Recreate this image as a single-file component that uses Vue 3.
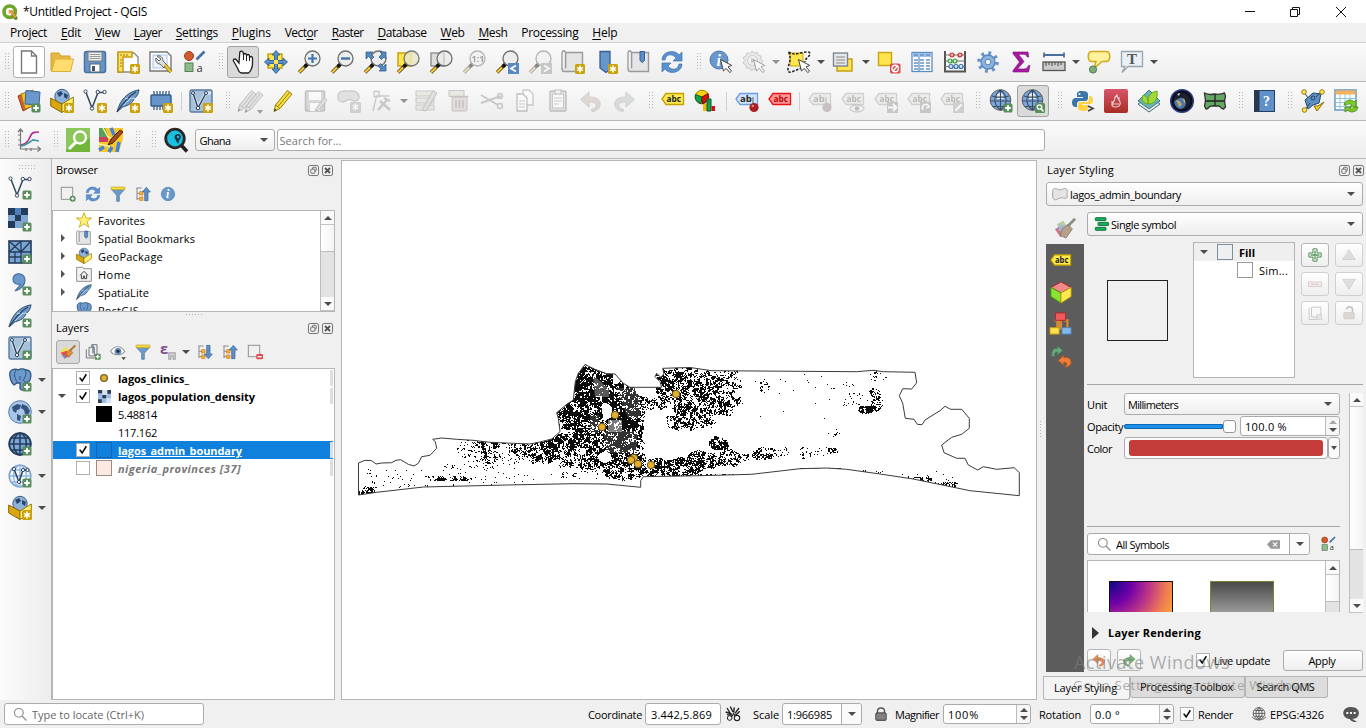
<script setup>
// Tracks a run of text so it fills the given width in pixels.
const vFit = {
  mounted(el, { value }) {
    if (!value) return
    const w = el.getBoundingClientRect().width
    const n = el.textContent.trim().length
    el.style.letterSpacing = ((value - w) / n).toFixed(3) + 'px'
  }
}

const plus = '<rect x="14.5" y="14.5" width="9" height="9" rx="1.5" fill="#5b8c5c"/><path d="M19 16.2v5.6M16.2 19h5.6" stroke="#fff" stroke-width="2"/>'
const star = '<rect x="14" y="14" width="10" height="10" rx="1.500" fill="#c9a20c"/><path d="M19 15.500v7M16 17.300l6 3.400M22 17.300l-6 3.400" stroke="#fff" stroke-width="1.500"/>'
const cursor = '<path d="M11.500 9.500l3 11.500 2.700-2.600 3.600 4.200 1.700-1.500-3.500-4.200 3.700-1.500z" fill="#fff" stroke="#444" stroke-width="1"/>'
const handle = '<path d="M2 22.500L10 14.500" stroke="#4b3a10" stroke-width="3.600"/><path d="M2 22.500L7 17.500" stroke="#f7c936" stroke-width="2.200"/><path d="M8 16.500l2.600-2.600" stroke="#111" stroke-width="3.600"/>'
const lens = '<circle cx="15.500" cy="8.500" r="7.500" fill="#ececea" fill-opacity=".9" stroke="#6d6d6d" stroke-width="1.300"/>'
const world = '<circle cx="12" cy="12" r="11.300" fill="#a9c6ea" stroke="#5a7ea8"/><path d="M4 7l5-3 4 1-1 4-3 1-1 3-3-2zM14 4l5 2 3 5-2 4-3-1-1-4-3-2zM9 14l4 2-1 5-3-1z" fill="#35557f"/>'
const grid = '<path d="M.7 12h22.600M12 .7v22.600M3 6h18M3 18h18M12 .7C3.500 5 3.500 19 12 23.300M12 .7c8.500 4.300 8.500 18.300 0 22.600" fill="none"'
const vee = '<path d="M3 3.500L9 19 15 3.500h6" fill="none" stroke="#33475f" stroke-width="1.500"/><g fill="#fff" stroke="#33475f"><circle cx="2.500" cy="2.500" r="1.600"/><circle cx="9" cy="19.500" r="1.700"/><circle cx="14.800" cy="3" r="1.700"/><circle cx="21.500" cy="3" r="1.700"/></g>'
const feather = '<path d="M1 23C4 11 11 3 23 .8c-.3 4-2.500 7-5 9-1.500 4-5 6.500-11 8L1 23z" fill="#729bcb" stroke="#31506f"/><path d="M1 23C7 14 13 7 20 3" fill="none" stroke="#24405c" stroke-width="1.200"/><path d="M7 17l8-8 4 .5M9 10l3-1" stroke="#c4d9ef" fill="none"/>'
const box3d = '<circle cx="12" cy="7.500" r="7.200" fill="#8fb0d9" stroke="#3e5f88"/><path d="M7 4l4-2 2 3-4 3zM14 4l4 2-1 4-3-2z" fill="#27466b"/><path d="M.7 9L12 15v8.500L.7 17z" fill="#d9a60c" stroke="#866807"/><path d="M23.300 8L12 15v8.500L23.300 16z" fill="#ffee66" stroke="#997a10"/>'
const meshbox = '<rect x="1" y="1" width="22" height="22" rx="1.500" fill="#a8c1da" stroke="#587ba0" stroke-width="1.400"/><path d="M3 2.500L9 18 17 4h5" fill="none" stroke="#dbe7f3" stroke-width="3"/><path d="M4 4L9 19 17 4" fill="none" stroke="#29435e" stroke-width="1.400"/><g fill="#fff" stroke="#29435e"><circle cx="4" cy="4" r="1.500"/><circle cx="9" cy="19" r="1.700"/><circle cx="17" cy="4" r="1.500"/></g>'
const tag = (f, s, t, c) => `<path d="M1 10l4-5.500h17.500v11H5z" fill="${f}" stroke="${s}" stroke-width="1.300"/><text x="5.500" y="13.200" font-size="9" font-weight="bold" fill="${c}" font-family="Open Sans" textLength="14.500" lengthAdjust="spacingAndGlyphs">${t}</text>`
const gtag = tag('#e4e3d2', '#aaa', 'abc', '#777')
const refresh = '<path d="M2 10C2 1 15-1 19 5l3-3v9h-9l3-3C12 3 6 4 5 10zM22 14c0 9-13 11-17 5l-3 3v-9h9l-3 3c4 5 10 4 11-2z" fill="#5d91cd" stroke="#3f72ac" stroke-width=".7"/>'
const pencil = (f, s) => `<path d="M3 22.500l1.500-6.500L16.500 1.500l4.500 3.500L9 19.500z" fill="${f}" stroke="${s}"/><path d="M4.800 16.200l4 3M7 17.500L18.500 3.500" stroke="${s}"/><path d="M3 22.500l.7-3 2 1.500z" fill="#333"/>`
const undo = (f, s) => `<path d="M10 3v5c8 0 12 3 11 8-.5 4-3 6-8 6.500l-.500-2c4-1 5-3 4.500-5S14 13 10 13v5L1.500 10.500z" fill="${f}" stroke="${s}"/>`
const bars = '<g fill="#12b25a" stroke="#0a6336" stroke-width="1.300"><rect x="2" y="2.500" width="16" height="4.500" rx="1"/><rect x="6" y="9.700" width="16" height="4.500" rx="1"/><rect x="2" y="17" width="16" height="4.500" rx="1"/></g>'
const funnel = '<path d="M2 5l8 9v9h4v-9l8-9z" fill="#6c98cb" stroke="#45719f"/><rect x="1.500" y="1.500" width="21" height="4" rx="1" fill="#f6dc3d" stroke="#b9a022"/>'
const tree = '<path d="M2 3h8M3 3v18M3 11h6M3 19h6" stroke="#888" fill="none" stroke-width="1.500"/><rect x="7" y="8.500" width="5" height="5" fill="#f4ad42" stroke="#d87f14"/><rect x="7" y="16.500" width="5" height="5" fill="#f4ad42" stroke="#d87f14"/>'
const style = '<circle cx="7" cy="6" r="4.500" fill="#cf5a2c" stroke="#9c3f1a"/><path d="M14.500 9.500l8-8" stroke="#4371a8" stroke-width="2.600"/><rect x="3" y="13" width="8" height="8.500" fill="#8eb98d" stroke="#568057"/><text x="14.500" y="21.500" font-size="11" font-family="Open Sans" fill="#333">a</text>'
const elephant = '<path d="M2 4c2-4 7-3 8-2 3-2 7-1 8 0 5 0 6 5 4 10-1 2-3 3-5 2l-1 7c-1 2-4 1-4-1v-5H9l-3 2C3 15 1 8 2 4z" fill="#6d9acc" stroke="#31557f" stroke-width="1.300"/><path d="M8 2c-3 4-1 8 1 12M17 2c2 4 0 7-2 11M12 8v4" stroke="#31557f" fill="none"/>'

const icons = {
  new: '<path d="M4.500 1h10l5 5v17h-15z" fill="#fff" stroke="#777" stroke-width="1.400"/><path d="M14.500 1v5h5" fill="none" stroke="#777" stroke-width="1.300"/>',
  open: '<path d="M1 21V3h8l2 3h9v4" fill="#e5b83f" stroke="#d5a02e"/><path d="M1.500 21.500L5 9h18.500l-3 12.500z" fill="#ffdc6b" stroke="#dcae3a"/>',
  save: '<rect x="1.500" y="1.500" width="21" height="21" rx="2" fill="#6795ca" stroke="#4472a4" stroke-width="1.500"/><rect x="5" y="2" width="14" height="9" fill="#eee" stroke="#777"/><path d="M6.500 4.500h11M6.500 6.500h11M6.500 8.500h11" stroke="#999"/><rect x="7" y="14" width="10" height="8" fill="#fff" stroke="#567"/><rect x="9" y="16" width="3" height="5" fill="#456"/>',
  layoutNew: '<path d="M2 3h16l4 4v15H2z" fill="#fff" stroke="#888" stroke-width="1.300"/><path d="M2 2h14v5H7v15H2z" fill="#ffe066" stroke="#c49c16" stroke-width="1.500"/><path d="M5 4v2M8 4v2M11 4v2M4 10h2M4 13h2M4 16h2" stroke="#987410"/>' + star,
  layoutMgr: '<path d="M1 2h17l4 4v15H1z" fill="#fff" stroke="#777" stroke-width="1.400"/><rect x="4" y="5" width="14" height="13" fill="#eef4fb" stroke="#aac3df"/><path d="M8 6c3-1 6 1 6 5l4 4-3 3-4-4c-3 0-5-3-4-6l3 3 2-2z" fill="#ddd" stroke="#666"/><path d="M16 15l6 7" stroke="#8a6f12" stroke-width="3.600"/><path d="M16 15l6 7" stroke="#e8c63a" stroke-width="2.300"/>',
  style,
  hand: '<path d="M8 13L5.500 10c-1.500-2-4-.5-3 1l4 7c1 3 2 5 4 5h7c2-1 4-6 4-9V8c0-2-2.700-2-3 0V6c0-2-3-2-3 0V5c0-2-3-2-3 0l-.3-2.500C11.500.5 8.500 1 8.700 3z" fill="#fff" stroke="#222" stroke-width="1.300"/><path d="M12.500 5v5M15.500 6v5M18.500 7v4" stroke="#222"/>',
  pan: '<rect x="4" y="4" width="14" height="14" fill="#ffe44d" stroke="#c9a40d" stroke-width="1.500"/><path d="M12 .5l4 4.500h-2.500v5.500H19V8l4.500 4-4.500 4v-2.500h-5.500V19H16l-4 4.500L8 19h2.500v-5.500H5V16L.5 12 5 8v2.500h5.500V5H8z" fill="#5c8fc8" stroke="#2f5d91" stroke-width=".9"/><path d="M10 10h4v4h-4z" fill="#ffe44d"/>',
  zin: handle + lens + '<path d="M15.500 4v9M11 8.500h9" stroke="#3f74ad" stroke-width="2.200"/>',
  zout: handle + lens + '<path d="M11 8.500h9" stroke="#3f74ad" stroke-width="2.400"/>',
  zfull: handle + lens + '<path d="M3 2h7L8 4l3 3-2.500 2.500L5.500 6.500 3 9zM23 2h-6l2 2-3 3 2.500 2.500L21 7l2 2zM23 21h-7l2-2-3-3 2.500-2.500L20.500 16.500 23 14z" fill="#5688c0" stroke="#315f92" stroke-width=".8"/>',
  zsel: '<rect x="2" y="3" width="13" height="13" fill="#ffe44d" stroke="#c9a40d" stroke-width="1.500"/>' + handle + '<circle cx="15.500" cy="8.500" r="7.500" fill="#e9e6c4" fill-opacity=".85" stroke="#777" stroke-width="1.300"/>',
  zlay: '<rect x="2" y="3" width="13" height="13" fill="#ddd" stroke="#888" stroke-width="1.300"/>' + handle + lens + '<path d="M15 3v12" stroke="#bbb"/>',
  z11: handle + lens + '<text x="9.500" y="12" font-size="9" font-weight="bold" font-family="Open Sans" fill="#444">1:1</text>',
  zprev: handle + lens + '<rect x="13" y="13" width="11" height="11" fill="#5689bf"/><path d="M21 15.500l-5 3 5 3" fill="none" stroke="#fff" stroke-width="1.800"/>',
  znext: handle + lens + '<rect x="13" y="13" width="11" height="11" fill="#999"/><path d="M16 15.500l5 3-5 3" fill="none" stroke="#fff" stroke-width="1.800"/>',
  mapview: '<path d="M4.500 2.500h17v19H3c-2.500 0-2.500-4 0-4h1.500z" fill="#e5e5e5" stroke="#999" stroke-width="1.400"/><path d="M4.500 18V3c0-3-3.500-3-3.500 0v16" fill="#f3f3f3" stroke="#999" stroke-width="1.300"/>' + star,
  bookmark: '<path d="M6 1.500h10v18l-4 3-6-4.500z" fill="#6896ca" stroke="#365f91" stroke-width="1.300"/>' + star,
  bookmarks: '<path d="M4.500 2.500h17v19H3c-2.500 0-2.500-4 0-4h1.500z" fill="#e5e5e5" stroke="#999" stroke-width="1.400"/><path d="M4.500 18V3c0-3-3.500-3-3.500 0v16" fill="#f3f3f3" stroke="#999" stroke-width="1.300"/><path d="M13 1.500h4.500v9l-2.200 2-2.300-2z" fill="#5c8fca" stroke="#345f94"/>',
  refresh,
  identify: '<circle cx="10" cy="10" r="9" fill="#6b98ca" stroke="#4a78ad"/><text x="7.500" y="16" font-size="16" font-style="italic" font-weight="bold" font-family="Liberation Serif" fill="#fff">i</text>' + cursor,
  action: '<path d="M10 1l2.200 2.200L15 2l1 3 3 1-.5 3L21 11l-2 2.500.3 3-3 .8-1.300 2.700-3-1-2.500 1.500L7.500 18 4.500 18l-.8-3L1 13l1.500-2.500L1.200 7.500 4 6l.8-3 3 .5z" fill="#ddd" stroke="#999"/><circle cx="10.500" cy="10.500" r="5" fill="#eee" stroke="#999"/><path d="M9 7.500l4.500 3-4.500 3z" fill="#999"/>' + cursor,
  select: '<path d="M3 3h13v13H3z" fill="#ffe44d" stroke="#c9a40d"/><path d="M1.500 2c5 3 8 2 12 1s10-2 9.500 1-5 4-5 8M1.500 2c3 6 1 10 0 14s-1 7 3 6l10-4" fill="none" stroke="#222" stroke-width="1.500" stroke-dasharray="2.500 1.500"/>' + cursor,
  selform: '<rect x="5" y="9" width="15" height="12" fill="#ffe44d" stroke="#c09a0c" stroke-width="1.400"/><rect x="1.500" y="3" width="14" height="13" fill="#e8e8e8" stroke="#7d8790" stroke-width="1.400"/><path d="M4 7h9M4 10h9M4 13h9" stroke="#888" stroke-width="1.200"/>',
  desel: '<rect x="1.500" y="2.500" width="13" height="13" fill="#ffe44d" stroke="#c9a40d" stroke-width="1.400"/><rect x="13" y="13.500" width="10.500" height="10" rx="1.500" fill="#df4d4d"/><circle cx="18.200" cy="18.500" r="3.200" fill="none" stroke="#fff" stroke-width="1.400"/><path d="M16 21l4.500-5" stroke="#fff" stroke-width="1.400"/>',
  table: '<rect x="2" y="2.500" width="20" height="19" fill="#fff" stroke="#5b8bc0" stroke-width="1.300"/><path d="M2.500 3h19v4h-19z" fill="#9dc0e8"/><path d="M4 10h4M10 10h4M16 10h4M4 13h4M10 13h4M16 13h4M4 16h4M10 16h4M16 16h4M4 19h4M10 19h4M16 19h4M9 7v14M4 5h4M10 5h4M16 5h4" stroke="#6794c8" stroke-width="1.300"/>',
  abacus: '<path d="M2 1v21M22 1v21M1 21.500h22" stroke="#555" stroke-width="2"/><path d="M2 5h20M2 11h20M2 16.500h20" stroke="#777"/><g stroke-width="1.200"><g fill="#f6b0b0" stroke="#c02f2f"><circle cx="9" cy="5" r="2"/><circle cx="17" cy="5" r="2"/></g><g fill="#c9ecc9" stroke="#3f9b45"><circle cx="7" cy="11" r="2"/><circle cx="12" cy="11" r="2"/></g><g fill="#d7e7fa" stroke="#3b6ea8"><circle cx="8" cy="16.500" r="2"/><circle cx="13" cy="16.500" r="2"/><circle cx="18" cy="16.500" r="2"/></g></g>',
  gear: '<circle cx="12" cy="12" r="9" fill="none" stroke="#6795ca" stroke-width="3.600" stroke-dasharray="2.900 4.169"/><circle cx="12" cy="12" r="7" fill="#8db2de" stroke="#5687c0" stroke-width="1.300"/><circle cx="12" cy="12" r="2.800" fill="#f4f4f4" stroke="#5687c0"/>',
  sigma: '<path d="M4 2h15l.7 5h-1.500c-.7-2-1.500-2.700-4-2.700H9.500L15 11.500 8.500 19h6c3 0 4-1 5-3.500H21L19.500 22H4v-1.500l6.500-8.500L4 3.700z" fill="#a918a0" stroke="#7a0a78" stroke-width=".6"/>',
  measure: '<path d="M2 5h20M2 2.500v5M22 2.500v5" stroke="#4a6f9c" stroke-width="1.800"/><rect x="1" y="12" width="22" height="8.500" fill="#ccc" stroke="#555" stroke-width="1.300"/><path d="M4 12v4M7 12v3M10 12v4M13 12v3M16 12v4M19 12v3" stroke="#444"/>',
  tip: '<path d="M5 1.500h14c5 0 5 10 0 10h-4l-8 7 2-7H5c-5 0-5-10 0-10z" fill="#fff29a" stroke="#d3a91a" stroke-width="1.500"/><circle cx="6" cy="19.500" r="3.600" fill="#7dab7c" stroke="#4e7d50"/>',
  text: '<path d="M1.500 1.500h21v15H8l-6 6 3-6H1.500z" fill="#e9f0f6" stroke="#9aa5ae" stroke-width="1.300"/><text x="7" y="14" font-size="15" font-weight="bold" font-family="Liberation Serif" fill="#555">T</text>',
  dsm: '<path d="M1 7l11-5 5 14-11 6z" fill="#d35f2f" stroke="#9b3c16"/><path d="M4 5l12-4 3 15-11 4z" fill="#f0bf2c" stroke="#a77f10"/><path d="M9 1.500L23 3l-1 13-14-1z" fill="#6b98cc" stroke="#3b6698"/>' + plus,
  gpkg: box3d + star, vee: vee + star, feather: feather + star,
  chip: '<rect x="2" y="6" width="20" height="11" rx="1" fill="#6794c8" stroke="#345c8b" stroke-width="1.400"/><path d="M5 2v4M8 2v4M11 2v4M14 2v4M17 2v4M20 2v4M5 17v4M8 17v4M11 17v4M14 17v4" stroke="#345c8b" stroke-width="1.300"/>' + star,
  meshN: meshbox + star,
  edits: '<g transform="translate(-3 0)">' + pencil('#ccc', '#888') + '</g><g transform="translate(4 1)">' + pencil('#ccc', '#888') + '</g><path d="M19 21h6l-3 4z" fill="#444"/>',
  pencil: pencil('#f7df3f', '#91800d'),
  saveEd: '<rect x="1.500" y="2" width="19" height="20" rx="1" fill="#bbb" stroke="#888" stroke-width="1.500"/><rect x="5" y="3" width="12" height="8" fill="#fff"/><rect x="6" y="14" width="10" height="8" fill="#fff"/><path d="M11 21l9-12 3 2-9 11z" fill="#ccc" stroke="#888"/>',
  poly: '<path d="M2 4c4-4 6-1 11-2 5-1 9 2 9 6s-4 5-8 3-5 2-8 2-5-2-5-4 0-4 1-5z" fill="#ccc" stroke="#999" stroke-width="1.300"/><rect x="13" y="13" width="11" height="11" rx="1.500" fill="#aaa"/><path d="M18.500 14.500v7M15.500 16l6 4M21.500 16l-6 4" stroke="#fff" stroke-width="1.500"/>',
  node: '<path d="M3 22L6.500 7h13M4 2.500h5v5H4z" fill="none" stroke="#999" stroke-width="1.300"/><path d="M8 21L17 11M10 12l10 9M14 9l6 3" stroke="#999" stroke-width="2.500"/>',
  multi: '<g fill="#dcdcc4" stroke="#999"><rect x="2" y="2" width="18" height="5"/><rect x="2" y="9" width="18" height="5"/><rect x="2" y="16" width="18" height="5"/></g><path d="M8 21L19 2l4 2-11 18z" fill="#ccc" stroke="#888"/>',
  del: '<rect x="2" y="1.500" width="15" height="6" fill="#dcdcc4" stroke="#999"/><rect x="5" y="8" width="15" height="14" rx="1" fill="#dfc3c3" stroke="#a88"/><path d="M3.500 7.500h18M9 11v8M12.500 11v8M16 11v8" stroke="#a88" stroke-width="1.500"/>',
  cut: '<path d="M1 6l17 10M1 14L21 7" stroke="#999" stroke-width="2"/><circle cx="20" cy="7" r="2.500" fill="none" stroke="#999" stroke-width="1.500"/><circle cx="20" cy="17" r="2.500" fill="none" stroke="#999" stroke-width="1.500"/>',
  copy: '<path d="M10 1h6l4 4v11H10z" fill="#fff" stroke="#999" stroke-width="1.300"/><path d="M4 5h6l4 4v13H4z" fill="#fff" stroke="#888" stroke-width="1.300"/><path d="M6 12h6M6 15h6M6 18h6" stroke="#999"/>',
  paste: '<rect x="4" y="2" width="16" height="20" rx="1" fill="#ccc" stroke="#888" stroke-width="1.400"/><rect x="6.500" y="5" width="11" height="14" fill="#fff" stroke="#999"/><rect x="9" y="1" width="6" height="4" fill="#eee" stroke="#888"/><path d="M8 9h8M8 12h8M8 15h5" stroke="#999"/>',
  undo: undo('#ccb8aa', '#b9a294'), redo: '<g transform="matrix(-1 0 0 1 24 0)">' + undo('#b4c6b4', '#9cb09c') + '</g>',
  abc: tag('#fce94f', '#c4a000', 'abc', '#222'),
  abcLow: '<g transform="translate(0 2)">' + tag('#fce94f', '#c4a000', 'abc', '#222') + '</g>',
  diagram: '<circle cx="8" cy="8" r="6.800" fill="#f5d20c" stroke="#a08000"/><path d="M8 8L1.500 5.500C.5 10 3 14 7 14.800z" fill="#12a04d" stroke="#075b28"/><path d="M8 8l6-3.500c1.500 5-1 9-5.500 10.300z" fill="#d41111" stroke="#850909"/><path d="M9 15h4v7H9z" fill="#f5b90c"/><path d="M13 10h4v12h-4z" fill="#12a04d" stroke="#075b28"/><path d="M17.500 17H21v5h-3.500z" fill="#d41111"/>',
  abcPin: '<path d="M1 10l4-5.500h17.500v11H5z" fill="#cfe4fb" stroke="#6aa0de" stroke-width="1.300"/><text x="5" y="13.200" font-size="9.500" font-weight="bold" fill="#222" font-family="Open Sans">ab</text><path d="M18 8v8" stroke="#888" stroke-width="1.500"/><circle cx="19" cy="18.500" r="4.600" fill="#a82020"/><circle cx="17.800" cy="17" r="1.200" fill="#d88"/>',
  abcRed: tag('#ff9999', '#ee1111', 'abc', '#c00000'),
  gPin: '<path d="M1 10l4-5.500h17.500v11H5z" fill="#e4e3d2" stroke="#aaa" stroke-width="1.300"/><text x="5" y="13.200" font-size="9.500" font-weight="bold" fill="#777" font-family="Open Sans">ab</text><path d="M18 8v8" stroke="#999" stroke-width="1.500"/><circle cx="19" cy="18.500" r="4.600" fill="#a88"/>',
  gEye: gtag + '<ellipse cx="16" cy="19.500" rx="7" ry="3.500" fill="#eee" stroke="#888"/><circle cx="16" cy="19.500" r="2.300" fill="#888"/>',
  gMove: gtag + '<rect x="13" y="13" width="11" height="11" fill="#999"/><path d="M14 18.500h8M19 15l3.500 3.500L19 22" stroke="#fff" stroke-width="1.800" fill="none"/>',
  gRot: gtag + '<rect x="13" y="13" width="11" height="11" fill="#999"/><path d="M16 21c-3-5 5-8 6-3l-3 1" stroke="#fff" stroke-width="1.800" fill="none"/>',
  gEdit: gtag + '<rect x="13" y="13" width="11" height="11" fill="#aaa"/><path d="M15.500 21.500l6-6" stroke="#fff" stroke-width="2.200"/>',
  globeP: '<circle cx="11.500" cy="11" r="10.300" fill="#7ba6dc" stroke="#5a5a5a"/><path d="M8 5c2-1.500 4-1.500 6 0l1 5H8z" fill="#fff" opacity=".8"/><path d="M3 7c4 1.500 13 1.500 17 0M1.500 12h20M4 17.500h15M11.500 1v20M11.500 1C4 7 4 15 11.500 21M11.500 1c7.500 6 7.500 14 0 20" stroke="#3d4d5d" fill="none" stroke-width="1.100"/>' + plus,
  globeS: '<circle cx="11.500" cy="11" r="10.300" fill="#7ba6dc" stroke="#5a5a5a"/><path d="M8 5c2-1.500 4-1.500 6 0l1 5H8z" fill="#fff" opacity=".8"/><path d="M3 7c4 1.500 13 1.500 17 0M1.500 12h20M4 17.500h15M11.500 1v20M11.500 1C4 7 4 15 11.500 21M11.500 1c7.500 6 7.500 14 0 20" stroke="#3d4d5d" fill="none" stroke-width="1.100"/><rect x="14" y="14" width="10" height="10" rx="1.500" fill="#5b8c5c"/><circle cx="18.500" cy="18" r="2.200" fill="none" stroke="#fff" stroke-width="1.300"/><path d="M20 19.500l2.500 3" stroke="#fff" stroke-width="1.500"/>',
  python: '<path d="M11 2c-5 0-5 2-5 4v2h6v1H4c-4 0-4 9 0 9h2v-3c0-2 1.500-3 3-3h5c2 0 3-1 3-3V5c0-2-2-3-6-3z" fill="#3a76a8"/><path d="M12 22c5 0 5-2 5-4v-2h-6v-1h8c4 0 4-8 0-8h-1v3c0 2-1.500 3-3 3h-5c-2 0-3 1-3 3v3c0 2 2 3 5 3z" fill="#ffd343"/><circle cx="8.500" cy="5" r="1" fill="#fff"/><path d="M17 17l5 2.500-5 2.500" fill="none" stroke="#444" stroke-width="1.700"/>',
  fire: '<defs><linearGradient id="fi" x2="0" y2="1"><stop offset="0" stop-color="#d9566b"/><stop offset="1" stop-color="#a82d22"/></linearGradient></defs><rect width="24" height="24" rx="2" fill="url(#fi)"/><path d="M13 6c-4 3-1 4-3 6s-3 6 1 6 6-2 5-5-3-3-3-7zM8 12v5M15 8v3M9 15h6" fill="none" stroke="#fff" stroke-opacity=".75" stroke-width="1.100"/>',
  leaf: '<path d="M1 15l11 8 11-8-11-8z" fill="#eee" stroke="#3d6873"/><path d="M1 12l11 8 11-8L12 1z" fill="#6ab3b3" stroke="#3c7980"/><path d="M11 15C4 14 5 9 6 6c4 2 6 4 5 9zM11 15c-1-8 3-12 9-13 1 8-2 13-9 13z" fill="#a0d936" stroke="#6aa71d"/>',
  earth: '<circle cx="12" cy="12" r="11.300" fill="#0a0c1e" stroke="#2c3c7c" stroke-width="1.500"/><circle cx="12" cy="12" r="8.500" fill="#1b202a"/><path d="M4 13c3-4 9-6 11-2s0 8-4 9c-4 0-6-3-7-7z" fill="#4776a8"/><path d="M6 11l4 1 2 4-3 2zM12 9l3 2v4z" fill="#bfa66b"/><path d="M7 5l3-1-1 3z" fill="#d5d9e5"/>',
  bow: '<path d="M1.500 4c4 2 6 2 10 1 4 1 6 0 10-1l1 3-1 5 1 6-2 2c-4-1-3-3-5-3H8c-2 0-2 3-5 3l-1.500-3 1-5z" fill="#65a765" stroke="#333" stroke-width="1.300"/><path d="M2 12h20M12 5v12" stroke="#222" stroke-width="1.300"/>',
  help: '<rect x="2.500" y="1.500" width="20" height="21" fill="#5f90c8" stroke="#24405f"/><rect x="2.500" y="1.500" width="5" height="21" fill="#26384c"/><text x="11" y="17" font-size="14" font-weight="bold" font-family="Liberation Serif" fill="#fff">?</text>',
  topo: '<path d="M4 11l8-7 8 1-2 9-6 2-5 4z" fill="#5d8ec4" stroke="#27486e"/><path d="M3 3l4 6M20 3l-5 5M4 21l5-7" stroke="#444"/><g fill="#ffe44d" stroke="#9a7c10"><circle cx="3" cy="3" r="2.300"/><circle cx="21" cy="3" r="2.300"/><circle cx="3.500" cy="21" r="2.300"/></g><circle cx="12" cy="9" r="2" fill="none" stroke="#27486e"/><path d="M13 17l3 5 7-9-6 4z" fill="#f8cf1c" stroke="#8c6c07"/>',
  sheet: '<rect x="1" y="1" width="21" height="20" fill="#fff" stroke="#5a90b6" stroke-width="1.400"/><path d="M1.500 1.500h20v4h-20z" fill="#f5b05c"/><path d="M1 9.500h21M1 13.500h21M1 17.500h21M6 5v16M11 5v16M16 5v16" stroke="#8fc5e4"/><path d="M10 16c1-6 9-6 10-3l2-2v7h-6l2-2c-2-2-4-1-5 0zM24 18c-1 6-9 6-10 3l-3 2v-5h6l-1.500 1.500c2 1 4 .5 5-1.500z" fill="#7ccb2a" stroke="#448512" stroke-width=".8"/>',
  plot: '<path d="M3.500 1v20h20M1 4l2.500-3L6 4M20.500 18.500l3 2.500-3 2.500M1 7h3M1 12h3M1 17h3M9 20v3M14 20v3" fill="none" stroke="#777" stroke-width="1.200"/><path d="M4 17c5-1 7-3 9-8s4-5 9-5" fill="none" stroke="#b52996" stroke-width="1.700"/><path d="M4 18c6-1 8-4 12-6l6 1" fill="none" stroke="#3d96a0" stroke-width="1.700"/>',
  osmS: '<rect width="24" height="24" fill="#72b53b"/><path d="M0 0h24v10L0 22z" fill="#8cc75a"/><circle cx="14" cy="9.500" r="6" fill="none" stroke="#fff" stroke-width="2.300"/><path d="M3 21l7-7" stroke="#fff" stroke-width="3"/>',
  osmE: '<path d="M0 0h24v10l-4 14H0z" fill="#f8c72c"/><path d="M0 0h6l3 7v6H0z" fill="#57a05a"/><path d="M0 9h9v5H0z" fill="#cc4060"/><path d="M4 0l5 9 7 3M0 16l10 2 2 6" stroke="#fff3a0" stroke-width="1.500" fill="none"/><path d="M12 0l3 7M20 14l-2 10M10 24l3-5M0 22l5-3" stroke="#4085d8" stroke-width="3.500" fill="none"/><path d="M9 17l3-6 9-9 3 2-10 11z" fill="#a14e1c" stroke="#552406"/>',
  qms: '<path d="M17 17l6 6.500" stroke="#222" stroke-width="3.500"/><circle cx="11" cy="10.500" r="9.300" fill="#18bfdf" stroke="#282828" stroke-width="2.800"/><path d="M14 6c-4 0-4 4-2.500 5.500L14 16l1.500-4.500C18 10 17 6 14 6z" fill="#234"/><circle cx="14" cy="9" r="1.200" fill="#18bfdf"/>',
  sVee: vee + plus,
  raster: '<rect width="20" height="20" fill="#7fa5d2"/><path d="M0 0h7v7H0zM13 0h7v7h-7zM7 7h6v6H7zM0 13h7v7H0z" fill="#233c5b"/><path d="M7 0h6v7H7z" fill="#4f7fb8"/>' + plus,
  sMesh: '<rect x="1" y="1" width="22" height="22" fill="#7aa4d3" stroke="#233c5b" stroke-width="1.600"/><path d="M1 12h22M13 1v22M1 1l12 11M13 1L1 12M13 12L23 1M7 12v11M1 17h12" stroke="#233c5b" fill="none" stroke-width="1.300"/>' + plus,
  comma: '<path d="M5 7c0-7 12-7 12 1 0 6-4 9-10 11 3-3 5-5 5-7-4 1-7-1-7-5z" fill="#6b98cb" stroke="#44719f" stroke-width="1.200"/>' + plus,
  sFeather: feather + plus, sMeshV: meshbox + plus,
  pg: elephant + plus, world: world + plus,
  wms: '<circle cx="12" cy="12" r="10.800" fill="#7ba5d6" stroke="#233c5b" stroke-width="1.800"/>' + grid + ' stroke="#233c5b" stroke-width="1.500"/>' + plus,
  wfs: '<circle cx="12" cy="12" r="10.800" fill="#f4f8fd" stroke="#7ba2cf" stroke-width="1.500"/>' + grid + ' stroke="#8fb3de" stroke-width="1.300"/><path d="M6 5l5 13 4-12h4" fill="none" stroke="#2c4563" stroke-width="1.500"/><g fill="#fff" stroke="#2c4563"><circle cx="6" cy="5" r="1.600"/><circle cx="11" cy="18" r="1.600"/><circle cx="15" cy="6" r="1.600"/><circle cx="19.500" cy="6" r="1.600"/></g>' + plus,
  sGpkg: box3d + star,
  addsel: '<rect x="2" y="2" width="17" height="18" fill="none" stroke="#999" stroke-width="1.600"/><circle cx="19" cy="19" r="4.500" fill="#5b8c5c"/><path d="M19 16.500v5M16.500 19h5" stroke="#fff" stroke-width="1.600"/>',
  funnel,
  collapse: tree + '<path d="M17 2l6 7h-3.500v13h-5V9H11z" fill="#5d8fc6" stroke="#31608f"/>',
  expand: tree + '<path d="M17 22l6-7h-3.500V2h-5v13H11z" fill="#5d8fc6" stroke="#31608f"/>',
  info: '<circle cx="12" cy="12" r="10" fill="#6b98cb" stroke="#4a78ad"/><text x="9" y="18.500" font-size="18" font-style="italic" font-weight="bold" font-family="Liberation Serif" fill="#fff">i</text>',
  fav: '<path d="M12 1l3 8h8.500l-7 5.300 2.700 8.700-7.200-5.300L4.800 23l2.700-8.700L.5 9H9z" fill="#fff27a" stroke="#c7a913" stroke-width="1.300"/>',
  box: box3d,
  home: '<path d="M1 2h9l2 2h11v19H1z" fill="#f3f3f3" stroke="#888" stroke-width="1.400"/><path d="M6 14l6-6 6 6M8 13v6h3v-4h2v4h3v-6" fill="none" stroke="#444" stroke-width="1.500"/>',
  featherS: feather, elephant,
  brush: '<path d="M3 8l7-4 4 6-7 6z" fill="#b9cfa0"/><path d="M1 13l6-3 7 8-7 4z" fill="#cf7389"/><path d="M6 8l6 2-1 6-6-1z" fill="#9cb9d8"/><path d="M9 13l6-5 5 5-7 10-6-3z" fill="#b7a08a" stroke="#8d7f6c"/><path d="M15 10l8-8" stroke="#8d8d82" stroke-width="3"/>',
  brushR: '<path d="M1 9l9-5 4 9-8 4z" fill="#f2df58"/><path d="M1 13l9-3 5 7-8 5z" fill="#ee4c43"/><path d="M3 16l7 2-3 4z" fill="#5797d9"/><path d="M9 14l6-6 4 5-6 7z" fill="#d9923d" stroke="#aa6425"/><path d="M15 10l8-8" stroke="#b47532" stroke-width="3"/>',
  addgrp: '<path d="M2 8v13h12M6 5v13h8V5zM10 4V1h8v16h-3" fill="none" stroke="#777" stroke-width="1.500"/><path d="M12 2v12" stroke="#456c94" stroke-width="1.800"/>' + plus,
  eye: '<path d="M1 11c5-9 16-9 21 0-5 7-16 7-21 0z" fill="#fff" stroke="#999" stroke-width="1.600"/><circle cx="12" cy="11" r="5" fill="#5f88b4"/><circle cx="12" cy="11" r="2.200" fill="#1d2c3d"/><path d="M17 20h7l-3.500 4z" fill="#444"/>',
  eps: '<text x="0" y="15" font-size="22" font-weight="bold" font-family="Open Sans" fill="#7c4b8b">ε</text><path d="M13 13h10v10h-3.500v-5h-3v5H13z" fill="#ccc" stroke="#888"/>',
  remove: '<rect x="2" y="2" width="17" height="17" fill="none" stroke="#999" stroke-width="1.600"/><rect x="14" y="15" width="10" height="8" rx="1.500" fill="#df4d4d"/><path d="M16 19h6" stroke="#fff" stroke-width="2"/>',
  rast2: '<rect width="24" height="24" fill="#9fbde0"/><path d="M0 0h8v6H0zM17 0h7v7h-7zM8 9h7v6H8zM0 17h7v7H0z" fill="#2e3d52"/><path d="M8 0h9v9H8zM15 15h9v9h-9z" fill="#d5e2f2"/>',
  bars,
  polyG: '<path d="M1 8c0-5 5-5 8-3s6 0 9-1 5 1 5 4-1 4 0 7-3 4-6 3-6 0-9 2-7 0-7-4z" fill="#e4e4e4" stroke="#999" stroke-width="1.300"/>',
  cube: '<path d="M12 1l11 6-11 6L1 7z" fill="#f08a8a" stroke="#a72222"/><path d="M1 7l11 6v11L1 17z" fill="#8ae234" stroke="#4e9a06"/><path d="M23 7l-11 6v11l11-7z" fill="#fce94f" stroke="#c4a000"/>',
  boxes: '<path d="M8 8v8M5 8h5v9H4M12 9v9M15 8h4v9" stroke="#d28b34" stroke-width="2.500" fill="none"/><rect x="6" y="0" width="11" height="8" fill="#ef5b5b" stroke="#b42828"/><rect x="0" y="16" width="10" height="7" fill="#fce050" stroke="#c09a0c"/><rect x="13" y="16" width="10" height="7" fill="#86b7ea" stroke="#4b81ba"/>',
  hist: '<path d="M2 12C1 5 5 3 8 4V1l6 5-6 5V8C6 7 5 9 5 13z" fill="#6aa67a" stroke="#467c56"/><path d="M15 11v3c5-1 8 1 8 5 0 3-3 5-7 5 3-2 3-6-1-5v3l-6-5z" fill="#ee7d3a" stroke="#b05a24"/>',
  add: '<path d="M8.500 1.500h7v7h7v7h-7v7h-7v-7h-7v-7h7z" fill="#f4faf4" stroke="#4f8751" stroke-width="1.700"/><path d="M12 4.500v15M4.500 12h15" stroke="#5c9a5e" stroke-width="2.200"/>',
  minus: '<rect x="1" y="8.500" width="22" height="8" fill="#eee" stroke="#c99" stroke-width="1.500"/><path d="M5 12.500h14" stroke="#c99" stroke-width="2"/>',
  up: '<path d="M12 3l11 17H1z" fill="#ccc" stroke="#999"/>', down: '<path d="M12 21L1 4h22z" fill="#ccc" stroke="#999"/>',
  dup: '<path d="M2 3v20h14M6 2h16v17H6z" fill="#fafafa" stroke="#999" stroke-width="1.500"/><path d="M15 15h8v8h-8z" fill="#ddd" stroke="#999"/>',
  unlock: '<rect x="3" y="11" width="18" height="11" rx="1" fill="#c7bfb4" stroke="#999"/><path d="M8 6c0-6 10-6 10 0v5" fill="none" stroke="#999" stroke-width="3"/>',
  undoC: undo('#ef8a50', '#bf6e40'), redoC: '<g transform="matrix(-1 0 0 1 24 0)">' + undo('#78b87b', '#568c59') + '</g>',
  mag: '<circle cx="10" cy="10" r="7.500" fill="none" stroke="#909090" stroke-width="2"/><path d="M15.500 15.500L23 23" stroke="#909090" stroke-width="2.300"/>',
  clear: '<path d="M0 12l7-8h17v16H7z" fill="#999"/><path d="M11 8l8 8M19 8l-8 8" stroke="#fff" stroke-width="2"/>',
  extents: '<path d="M3 3l5 8M8 1l4 8M1 9l9 3M14 2l-1 8M21 3l-6 8M3 13l8 1M12 11l7 7M7 20l5-7M22 8l-6 6" stroke="#222" stroke-width="2"/><circle cx="18" cy="18" r="4" fill="#fff" stroke="#222" stroke-width="1.700"/><circle cx="7" cy="18" r="3.500" fill="#eee" stroke="#222" stroke-width="1.500"/>',
  lock: '<path d="M6 11V7c0-7 12-7 12 0v4" fill="none" stroke="#555" stroke-width="2.500"/><rect x="3" y="10" width="18" height="13" rx="2" fill="#777" stroke="#444" stroke-width="1.500"/><path d="M4 14h16M4 18h16" stroke="#999"/>',
  crs: '<circle cx="12" cy="11" r="10" fill="#eee" stroke="#555" stroke-width="1.500"/><path d="M2 11h20M4 6h16M4 16h16M12 1v20M12 1C5 6 5 16 12 21M12 1c7 5 7 15 0 20M0 17c6 7 18 7 24 0" stroke="#555" stroke-width="1.500" fill="none"/>',
  bubble: '<path d="M12 1.500c16 0 15 18 2 18l7 4c-4 1-9 0-11-4C-3 18-3 1.500 12 1.500z" fill="#555"/><path d="M5 10.500h3M10.500 10.500h3M16 10.500h3" stroke="#fff" stroke-width="3"/>',
  logo: '<circle cx="11.500" cy="11.500" r="8.500" fill="none" stroke="#6ea52b" stroke-width="5.500"/><path d="M12 12l4-1 7 9v3.500h-4z" fill="#4c8a1f"/><path d="M10 9h7l-1 2 6 9-3 1-6-8-3 2z" fill="#f09a43"/>',
  dock: '<rect x="1" y="1" width="22" height="22" rx="4" fill="none" stroke="#666" stroke-width="2"/><rect x="10" y="5" width="8" height="8" rx="1.500" fill="none" stroke="#666" stroke-width="2"/><rect x="6" y="9" width="9" height="9" rx="1.500" fill="#f0f0f0" stroke="#666" stroke-width="2"/>',
  shut: '<rect x="1" y="1" width="22" height="22" rx="4" fill="none" stroke="#666" stroke-width="2"/><path d="M6.500 6.500l11 11M17.500 6.500l-11 11" stroke="#555" stroke-width="4"/>',
  check: '<path d="M4 11l6 8L20 3" fill="none" stroke="#000" stroke-width="3.600"/>',
  point: '<circle cx="12" cy="12" r="5" fill="#e2ac35" stroke="#776022" stroke-width="2"/>'
}

// Toolbars: 'H' is a grip, 'S' a separator; suffixes: > menu arrow, ! disabled, * pressed, + raised
const parse = s => s.split(' ').map(t => {
  const name = t.replace(/[>!*+]/g, '')
  return { name, kind: name === 'H' ? 'grip' : name === 'S' ? 'sep' : 'btn', dd: t.includes('>'), off: t.includes('!'), on: t.includes('*'), up: t.includes('+') }
})
const row1 = parse('H new+ open save layoutNew layoutMgr style H hand* pan zin zout zfull zsel zlay z11! zprev znext! mapview bookmark bookmarks refresh H identify action!> select> selform> desel table abacus gear sigma measure> tip text>')
const row2 = parse('H dsm gpkg vee feather chip S meshN H edits! pencil saveEd! poly! node!> multi! del! cut! copy! paste! undo! redo! H abc diagram S abcPin abcRed S gPin! gEye! gMove! gRot! gEdit! H globeP globeS* H python fire leaf earth bow H help H topo sheet')
const side = parse('sVee raster sMesh comma sFeather sMeshV pg> world> wms wfs> sGpkg>')

const menus = [['Pro', 'j', 'ect', 37], ['', 'E', 'dit', 20], ['', 'V', 'iew', 25], ['', 'L', 'ayer', 28], ['', 'S', 'ettings', 42], ['', 'P', 'lugins', 39], ['Vect', 'o', 'r', 33], ['', 'R', 'aster', 32], ['', 'D', 'atabase', 49], ['', 'W', 'eb', 24], ['', 'M', 'esh', 29], ['Pro', 'c', 'essing', 57], ['', 'H', 'elp', 25]]

const browser = [['fav', 'Favorites', 47, 0], ['bookmarks', 'Spatial Bookmarks', 97, 1], ['box', 'GeoPackage', 65, 1], ['home', 'Home', 33, 1], ['featherS', 'SpatiaLite', 51, 1], ['elephant', 'PostGIS', 41, 0]]

const outline = 'M358.500 495V463L365 460.300 371.700 460.700 376 464 381.700 463 391.700 462.700 396 460.300 400.700 459.700 408.300 464.300 414 466 418.300 463.300 421.700 456.700 430 455.300 436.700 448.300 435.300 441.700 432.700 439.300 441.700 438 456.700 439.300 473.300 440.300 490 442.300 513.300 443.300 530 444 540 442 551.700 439 560 431.700 558.300 418.300 556.700 412.700 566.700 404.300 573.300 400 575.300 381.700 578.300 373.300 585 364.500 595 369.300 606.700 373.700 615 374 623.300 383.300 630 387.300 661.700 387.300 660 381.700 655 376.700 656.700 373.300 660.700 377.300 664 374 662.700 368.300 690 367.500 711.700 370.700 856.700 371.700 873.300 370.300 883.300 371.700 915 372.300 916.700 382.700 911.700 389 902.700 388.700 899.300 395.700 902.700 403.300 905.300 418.300 914 419.300 917.300 424.300 922 424.700 925 420 940 410.700 945 406.300 950.700 409.300 961.700 409.300 969.300 418.300 969.300 428.300 961.700 434.300 951.700 437.300 941.700 445 944 452.700 956.700 458.300 965 458.300 968.300 465 977.700 470 983.300 466.700 996.700 469.300 1014.300 467.700 1019.300 472.700V495.700L970 490.700 913.300 479 880 474 846.700 469.300 826.700 468 800 468.700 751.700 474.300 700 475.700 643.300 476.700 640.700 480.700V487.300L606.700 484 573.300 483.700 506.700 485 423.300 487 376.700 492.300z'

// Population raster: [x, y, radius x, radius y, density]
const blobs = [
  [590, 383, 26, 24, .8], [618, 400, 24, 20, .66], [588, 413, 38, 28, .68], [622, 425, 22, 34, .74], [590, 440, 34, 18, .62],
  [612, 452, 28, 18, .62], [622, 470, 22, 10, .5], [582, 462, 24, 9, .46], [590, 474, 44, 5, .14], [648, 402, 10, 6, .4],
  [542, 451, 20, 13, .6], [555, 443, 8, 6, .75], [495, 450, 38, 13, .38], [462, 468, 32, 4, .15], [445, 478, 32, 3, .34], [480, 474, 60, 14, .02], [385, 475, 30, 12, .03],
  [364, 491, 10, 4, .6], [450, 486, 100, 2, .08],
  [690, 385, 33, 22, .6], [694, 402, 33, 16, .56], [712, 402, 26, 16, .5], [690, 420, 24, 10, .46], [726, 382, 14, 15, .36], [661, 375, 6, 7, .7],
  [652, 467, 20, 10, .6], [680, 467, 28, 9, .68], [704, 460, 26, 10, .56], [718, 444, 11, 7, .66], [724, 458, 18, 9, .5], [742, 456, 8, 6, .4], [760, 454, 9, 6, .5], [771, 453, 7, 6, .5], [782, 453, 7, 6, .25], [805, 452, 7, 7, .38],
  [820, 451, 20, 4, .12], [832, 450, 6, 3, .45], [866, 409, 9, 4, .82], [876, 404, 6, 9, .5], [874, 392, 6, 6, .45], [873, 374, 4, 6, .4], [764, 386, 5, 7, .4], [830, 382, 30, 6, .03], [880, 376, 6, 5, .2], [855, 398, 16, 8, .08], [835, 433, 8, 5, .2],
  [820, 468.500, 22, 1.500, .7], [860, 471, 24, 2, .35], [700, 475, 60, 1.500, .3], [924, 479, 40, 8, .02], [920, 479, 12, 3, .4], [945, 484, 14, 3, .35], [790, 400, 60, 30, .003]
]
const holes = [[606, 411, 5, 9], [605, 457, 7, 6], [575, 470, 6, 2]]
let seed = 20117
const rnd = () => (seed = (seed * 1103515245 + 12345) % 2147483648) / 2147483648
const lattice = Array.from({ length: 3 }, () => Array.from({ length: 60000 }, () => rnd()))
const noise = (k, x, y, s) => {
  const u = (x - 350) / s, v = (y - 360) / s, a = Math.floor(u), b = Math.floor(v), f = u - a, g = v - b
  const at = (p, q) => lattice[k][q * 700 + p]
  return (at(a, b) * (1 - f) + at(a + 1, b) * f) * (1 - g) + (at(a, b + 1) * (1 - f) + at(a + 1, b + 1) * f) * g
}
let speck = ''
for (let y = 364; y < 496; y++) {
  for (let x = 358; x < 1020; x++) {
    const wide = noise(0, x, y, 7) - .5, mid = noise(1, x, y, 3.300) - .5
    let d = 0
    for (const [cx, cy, rx, ry, p] of blobs) {
      const q = ((x - cx) / rx) ** 2 + ((y - cy) / ry) ** 2 + (ry > 3 ? wide * 1.300 : 0)
      if (q < 1) d = Math.max(d, p * (q > .6 ? 1.300 - q * .5 : 1))
    }
    if (!d || holes.some(([cx, cy, rx, ry]) => ((x - cx) / rx) ** 2 + ((y - cy) / ry) ** 2 + mid < 1)) continue
    if (d > .1) d += mid * .55 + wide * .35
    const c = lattice[2][((y - 364) >> 1) * 340 + ((x - 358) >> 1)]
    if (d < .15 ? rnd() < d : rnd() * .5 + c * .5 < d * .9 + .03) speck += `M${x} ${y}h1v1h-1z`
  }
}
const clinics = [[676, 394], [615, 415], [602, 427], [634, 458], [631, 460], [638, 464], [651, 465]]
</script>

<template>
  <div class="win">
    <header class="title">
      <svg class="i16" viewBox="0 0 24 24" v-html="icons.logo" />
      <span v-fit="124" class="ttl">*Untitled Project - QGIS</span>
      <svg class="caps" viewBox="0 0 120 20"><g fill="none" stroke="#111" stroke-width="1"><path d="M5 9.500h10M50.500 7.500h7v7h-7zM52.500 7.500v-2h7v7h-2M96 5l10 10M106 5L96 15" /></g></svg>
    </header>
    <nav class="menu"><span v-for="m in menus" :key="m[1] + m[2]" v-fit="m[3]">{{ m[0] }}<u>{{ m[1] }}</u>{{ m[2] }}</span></nav>

    <div v-for="(row, k) in [row1, row2]" :key="k" class="bar" :class="'bar' + (k + 1)">
      <div v-for="(b, n) in row" :key="n" :class="[b.kind, { dd: b.dd, off: b.off }]">
        <template v-if="b.kind === 'btn'">
          <i class="face" :class="{ on: b.on, up: b.up }"><svg viewBox="0 0 24 24" class="i24" v-html="icons[b.name]" /></i>
          <b v-if="b.dd" class="tri" />
        </template>
      </div>
    </div>
    <div class="bar bar3">
      <div class="grip" /><div class="btn"><i class="face"><svg viewBox="0 0 24 24" class="i24" v-html="icons.plot" /></i></div>
      <div class="grip" /><div class="btn"><i class="face"><svg viewBox="0 0 24 24" class="i24" v-html="icons.osmS" /></i></div>
      <div class="btn"><i class="face"><svg viewBox="0 0 24 24" class="i24" v-html="icons.osmE" /></i></div>
      <div class="grip" /><div class="grip" />
      <div class="btn"><i class="face"><svg viewBox="0 0 24 24" class="i24" v-html="icons.qms" /></i></div>
      <div class="combo country"><span v-fit="31">Ghana</span><b class="tri" /></div>
      <div class="field find"><span v-fit="62">Search for...</span></div>
    </div>

    <main class="body">
      <aside class="side">
        <div class="hgrip" />
        <div v-for="b in side" :key="b.name" class="sbtn"><svg viewBox="0 0 24 24" class="i24" v-html="icons[b.name]" /><b v-if="b.dd" class="tri" /></div>
      </aside>

      <section class="docks">
        <div class="dhead"><span v-fit="42">Browser</span><svg viewBox="0 0 24 24" class="i11" v-html="icons.dock" /><svg viewBox="0 0 24 24" class="i11" v-html="icons.shut" /></div>
        <div class="dtools"><i v-for="n in ['addsel', 'refresh', 'funnel', 'collapse', 'info']" :key="n" class="dt"><svg viewBox="0 0 24 24" class="i16" v-html="icons[n]" /></i></div>
        <div class="tree btree">
          <div class="rows">
            <div v-for="r in browser" :key="r[1]" class="brow"><b class="rt" :class="{ hid: !r[3] }" /><svg viewBox="0 0 24 24" class="i16" v-html="icons[r[0]]" /><span v-fit="r[2]">{{ r[1] }}</span></div>
          </div>
          <div class="sb"><div class="sbb"><b class="tri u" /></div><div class="thumb t1" /><div class="groove" /><div class="sbb"><b class="tri" /></div></div>
        </div>
        <div class="split" />
        <div class="dhead lhead"><span v-fit="33">Layers</span><svg viewBox="0 0 24 24" class="i11" v-html="icons.dock" /><svg viewBox="0 0 24 24" class="i11" v-html="icons.shut" /></div>
        <div class="dtools ltools">
          <i class="dt on"><svg viewBox="0 0 24 24" class="i16" v-html="icons.brushR" /></i>
          <i v-for="n in ['addgrp', 'eye', 'funnel', 'eps']" :key="n" class="dt"><svg viewBox="0 0 24 24" class="i16" v-html="icons[n]" /></i>
          <b class="tri ltri" />
          <i v-for="n in ['expand', 'collapse', 'remove']" :key="n" class="dt"><svg viewBox="0 0 24 24" class="i16" v-html="icons[n]" /></i>
        </div>
        <div class="tree ltree">
          <div class="lrow"><i class="cb"><svg viewBox="0 0 24 24" v-html="icons.check" /></i><svg viewBox="0 0 24 24" class="i16 sym" v-html="icons.point" /><span v-fit="71" class="bold">lagos_clinics_</span><em /></div>
          <div class="lrow"><b class="tri exp" /><i class="cb"><svg viewBox="0 0 24 24" v-html="icons.check" /></i><svg viewBox="0 0 24 24" class="i13 sym" v-html="icons.rast2" /><span v-fit="137" class="bold">lagos_population_density</span><em /></div>
          <div class="lrow"><i class="sw blk" /><span v-fit="39">5.48814</span></div>
          <div class="lrow"><i class="sw none" /><span v-fit="39">117.162</span></div>
          <div class="lrow sel"><i class="cb"><svg viewBox="0 0 24 24" v-html="icons.check" /></i><i class="sw blue" /><span v-fit="124" class="bold und">lagos_admin_boundary</span><em /></div>
          <div class="lrow"><i class="cb" /><i class="sw pink" /><span v-fit="123" class="bold ital">nigeria_provinces [37]</span><em /></div>
        </div>
      </section>

      <section class="canvas">
        <svg width="694" height="538" viewBox="342 161 694 538">
          <defs><clipPath id="lagos"><path :d="outline" /></clipPath></defs>
          <g clip-path="url(#lagos)">
            <path :d="speck" fill="#0d0d0d" shape-rendering="crispEdges" />
            <path d="M593 375l16 14v8h-14z" fill="#fff" opacity=".32" />
            <path d="M608 420h14v12h-14z" fill="#fff" opacity=".45" />
            <path d="M590 415h9v18h-9zM603 431h34v22h-30zM616 388h24v30h-12z" fill="#fff" opacity=".16" />
          </g>
          <path :d="outline" fill="none" stroke="#3a3a3a" stroke-width="1" />
          <circle v-for="c in clinics" :key="c[0]" :cx="c[0]" :cy="c[1]" r="3.700" fill="#e4ae2f" stroke="#66531e" stroke-width="1" />
        </svg>
      </section>
      <div class="vgrip"><i /></div>

      <section class="right">
        <div class="dhead rhead"><span v-fit="67">Layer Styling</span><svg viewBox="0 0 24 24" class="i11" v-html="icons.dock" /><svg viewBox="0 0 24 24" class="i11" v-html="icons.shut" /></div>
        <div class="combo c1"><svg viewBox="0 0 24 24" class="i16" v-html="icons.polyG" /><span v-fit="111">lagos_admin_boundary</span><b class="tri" /></div>
        <div class="rbody">
          <div class="tabs">
            <div class="cur"><svg viewBox="0 0 24 24" class="i22" v-html="icons.brush" /></div>
            <div class="dark"><svg v-for="n in ['abcLow', 'cube', 'boxes', 'hist']" :key="n" viewBox="0 0 24 24" class="i22" v-html="icons[n]" /></div>
          </div>
          <div class="pane">
            <div class="combo c2"><svg viewBox="0 0 24 24" class="i16" v-html="icons.bars" /><span v-fit="65">Single symbol</span><b class="tri" /></div>
            <div class="symbol">
              <div class="prev" />
              <div class="stree">
                <div class="s1"><b class="tri" /><i class="box1" /><span v-fit="16" class="bold">Fill</span></div>
                <div class="s2"><i class="box1 g" /><span v-fit="29">Sim...</span></div>
              </div>
              <div class="sbtns"><i v-for="n in ['add', 'up', 'minus', 'down', 'dup', 'unlock']" :key="n" class="pb" :class="{ dis: n !== 'add' }"><svg viewBox="0 0 24 24" class="i14" v-html="icons[n]" /></i></div>
            </div>
            <div class="hr" />
            <div class="scroll">
              <div class="inner">
                <div class="frow"><label><span v-fit="20">Unit</span></label><div class="combo unit"><span v-fit="50">Millimeters</span><b class="tri" /></div></div>
                <div class="frow f2"><label><span v-fit="36">Opacity</span></label><div class="slider"><i /><b /></div><div class="spin op"><span v-fit="42">100.0 %</span><i class="sp"><b class="tri u lt" /><b class="tri" /></i></div></div>
                <div class="frow f3"><label><span v-fit="25">Color</span></label><div class="colr"><i /></div><div class="cdd"><b class="tri" /></div></div>
                <div class="hr h2" />
                <div class="symf">
                  <div class="field sf"><svg viewBox="0 0 24 24" class="i14" v-html="icons.mag" /><span v-fit="53">All Symbols</span><svg viewBox="0 0 24 24" class="i13 clr" v-html="icons.clear" /><i class="sdd"><b class="tri" /></i></div>
                  <svg viewBox="0 0 24 24" class="i16" v-html="icons.style" />
                </div>
                <div class="gal"><i class="g1" /><i class="g2" /><div class="sb gsb"><div class="sbb"><b class="tri u" /></div><div class="thumb t2" /><div class="groove" /></div></div>
              </div>
              <div class="sb msb"><div class="sbb"><b class="tri u" /></div><div class="thumb t3" /><div class="groove" /><div class="sbb"><b class="tri" /></div></div>
            </div>
            <div class="lr"><b class="rt big" /><span v-fit="93" class="bold">Layer Rendering</span></div>
            <div class="act"><i class="pb un"><svg viewBox="0 0 24 24" class="i14" v-html="icons.undoC" /></i><i class="pb un"><svg viewBox="0 0 24 24" class="i14" v-html="icons.redoC" /></i><i class="cb lv"><svg viewBox="0 0 24 24" v-html="icons.check" /></i><span v-fit="56">Live update</span><div class="apply"><span v-fit="27">Apply</span></div></div>
          </div>
        </div>
        <div class="btabs"><div class="ta"><span v-fit="63">Layer Styling</span></div><div class="tb2"><span v-fit="93">Processing Toolbox</span></div><div class="tc"><span v-fit="58">Search QMS</span></div></div>
        <div class="mark"><p><span v-fit="156">Activate Windows</span></p><p class="m2"><span v-fit="242">Go to Settings to activate Windows.</span></p></div>
      </section>
    </main>

    <footer class="status">
      <div class="field loc"><svg viewBox="0 0 24 24" class="i14" v-html="icons.mag" /><span v-fit="112">Type to locate (Ctrl+K)</span></div>
      <span v-fit="54">Coordinate</span>
      <div class="field co"><span v-fit="61">3.442,5.869</span></div>
      <svg viewBox="0 0 24 24" class="i16 ext" v-html="icons.extents" />
      <span v-fit="26" class="scl">Scale</span>
      <div class="field sc"><span v-fit="45">1:966985</span><i class="sdd"><b class="tri" /></i></div>
      <svg viewBox="0 0 24 24" class="i14 lk" v-html="icons.lock" />
      <span v-fit="44" class="mgl">Magnifier</span>
      <div class="spin mg"><span v-fit="31">100%</span><i class="sp"><b class="tri u" /><b class="tri" /></i></div>
      <span v-fit="42" class="rol">Rotation</span>
      <div class="spin ro"><span v-fit="25">0.0 °</span><i class="sp"><b class="tri u" /><b class="tri" /></i></div>
      <i class="cb rn"><svg viewBox="0 0 24 24" v-html="icons.check" /></i>
      <span v-fit="35">Render</span>
      <svg viewBox="0 0 24 24" class="i14 cr" v-html="icons.crs" />
      <span v-fit="54" class="eps">EPSG:4326</span>
      <svg viewBox="0 0 24 24" class="i16 bu" v-html="icons.bubble" />
    </footer>
  </div>
</template>

<style>
html, body { margin: 0; overflow: hidden; }
</style>

<style scoped>
.win { width: 1366px; height: 728px; background: #f0f0f0; font: 11px/16px "Open Sans", "Noto Sans", sans-serif; color: #000; display: flex; flex-direction: column; overflow: hidden; }
.win * { box-sizing: border-box; }
span { white-space: nowrap; display: inline-block; flex: none; }
.brow span, .lrow span, .combo span, .field span, .spin span, .frow label span, .s1 span, .s2 span, .act > span, .status > span { padding-top: 2px; }
svg { display: block; flex: none; overflow: visible; }
i, em { font-style: normal; display: block; }
.i24 { width: 24px; height: 24px; } .i22 { width: 22px; height: 22px; } .i16 { width: 16px; height: 16px; } .i14 { width: 14px; height: 14px; } .i13 { width: 13px; height: 13px; } .i11 { width: 11px; height: 11px; }
.bold { font-weight: 700; }
.tri { width: 0; height: 0; flex: none; border: 4px solid transparent; border-top-color: #4d4d4d; border-bottom: 0; }
.tri.u { border-top: 0; border-bottom: 4px solid #4d4d4d; }
.tri.u.lt { border-bottom-color: #aaa; }
.rt { width: 0; height: 0; border: 4px solid transparent; border-left: 4px solid #555; border-right: 0; }
.hid { visibility: hidden; }

.title { height: 23px; background: #fff; display: flex; align-items: center; padding-left: 2px; flex: none; }
.ttl { margin-left: 5px; font-size: 12px; }
.caps { width: 120px; height: 20px; margin-left: auto; margin-right: 6px; }
.menu { height: 19px; display: flex; gap: 13.950px; padding-left: 10px; align-items: center; font-size: 12px; flex: none; background: #f0f0f0; }
.menu u { text-underline-offset: 2px; }

.bar { display: flex; flex: none; align-items: center; border-top: 1px solid #b9b9b9; background: linear-gradient(#fafafa, #ededed); }
.bar1 { height: 39px; } .bar2 { height: 39px; } .bar3 { height: 38px; }
.bar1 { border-top-color: #d0d0d0; }
.grip { width: 16px; height: 18px; flex: none; display: flex; }
.grip::after { content: ""; width: 5px; height: 18px; margin-left: 8px; background: conic-gradient(from 270deg at 1px 1px, #b4b4b4 90deg, transparent 0) 0 0 / 3px 3px; }
.grip:first-child { width: 12.500px; }
.grip:first-child::after { margin-left: 5px; }
.sep { width: 7.300px; flex: none; display: flex; }
.sep::after { content: ""; width: 1px; height: 19px; margin-left: 3px; background: #cfcfcf; }
.btn { width: 33px; height: 34px; flex: none; display: flex; align-items: center; }
.btn.dd { width: 45px; }
.bar2 .btn.dd { width: 44px; }
.btn .tri { margin-left: 1px; }
.face { width: 33px; height: 32px; flex: none; display: flex; align-items: center; justify-content: center; }
.face.on { border: 1px solid #a2a2a2; background: #dadada; border-radius: 3px; width: 32px; }
.face.up { border: 1px solid #b0b0b0; background: #fff; border-radius: 3px; width: 32px; }
.off svg { opacity: .48; filter: grayscale(.6); }
.off .tri { opacity: .6; }

.combo { display: flex; align-items: center; border: 1px solid #ababab; border-radius: 3px; background: linear-gradient(#fff, #eee); }
.combo .tri { margin-left: auto; margin-right: 7px; }
.field { display: flex; align-items: center; border: 1px solid #ababab; border-radius: 3px; background: #fff; }
.country { width: 80px; height: 22px; margin-left: 2px; padding-left: 4px; flex: none; }
.find { width: 768px; height: 22px; margin-left: 2px; padding-left: 2px; color: #777; }
.country .tri { margin-right: 6px; }

.body { display: flex; height: 542px; flex: none; border-top: 1px solid #b9b9b9; }
.side { width: 52px; border-right: 1px solid #b5b5b5; background: linear-gradient(90deg, #fbfbfb, #ededed); padding-top: 6px; flex: none; }
.hgrip { width: 17px; height: 5px; margin: 0 0 1.500px 19px; background: conic-gradient(from 270deg at 1px 1px, #b4b4b4 90deg, transparent 0) 0 0 / 3px 3px; }
.sbtn { height: 32px; display: flex; align-items: center; padding-left: 8px; }
.sbtn .tri { margin-left: 6px; }

.docks { width: 283px; flex: none; display: flex; flex-direction: column; }
.dhead { display: flex; height: 22px; align-items: center; padding: 0 2px 0 4px; gap: 3px; flex: none; }
.dhead span { margin-right: auto; }
.dtools { display: flex; height: 26px; align-items: center; padding-left: 3px; flex: none; }
.dt { width: 25px; height: 24px; display: flex; align-items: center; justify-content: center; flex: none; }
.dt.on { border: 1px solid #a8a8a8; background: #d9d9d9; border-radius: 3px; width: 24px; }
.tree { background: #fff; border: 1px solid #b5b5b5; flex: none; }
.btree { height: 102px; display: flex; overflow: hidden; margin-top: 3px; }
.rows { flex: 1; }
.brow { height: 18px; display: flex; align-items: center; padding-left: 8px; }
.brow svg { margin: 0 6px 0 11px; }
.sb { display: flex; flex-direction: column; width: 14px; flex: none; border-left: 1px solid #bdbdbd; background: #e8e8e8; }
.sbb { height: 14px; flex: none; display: flex; align-items: center; justify-content: center; background: #fafafa; border-bottom: 1px solid #c4c4c4; }
.thumb { background: linear-gradient(90deg, #fff, #f4f4f4); flex: none; border-bottom: 1px solid #bbb; }
.groove { flex: 1; background: #e3e3e3; }
.t1 { height: 27px; }
.split { height: 4px; width: 17px; margin: 1px 0 0 134px; background: conic-gradient(from 270deg at 1px 1px, #b4b4b4 90deg, transparent 0) 0 1px / 3px 3px; flex: none; }
.lhead { height: 22px; }
.ltools { height: 26px; padding-left: 4px; }
.ltri { margin: 0 2px 0 2px; }
.ltree { flex: 1; padding-right: 1px; margin-top: 3px; }
.lrow { height: 18px; display: flex; align-items: center; padding-left: 24px; position: relative; }
.lrow .exp { margin: 0 11px 0 -19px; }
.lrow em { width: 3px; height: 16px; background: #ddd; margin-left: auto; }
.cb { width: 14px; height: 14px; border: 1px solid #b0b0b0; background: #fff; display: flex; align-items: center; justify-content: center; flex: none; margin-right: 6px; }
.cb svg { width: 10px; height: 10px; }
.lrow .cb { margin-left: -1px; }
.i16.sym { margin: 0 6px 0 0; }
.i13.sym { margin: 0 7px 0 2px; }
.sw { width: 16px; height: 16px; margin-right: 6px; flex: none; }
.blk { background: #000; margin-left: 19px; } .none { margin-left: 19px; } .blue { border: 1px solid #1765ae; } .pink { background: #fdebe3; border: 1px solid #9b8c86; }
.sel { background: #0f80dc; color: #fff; }
.und { text-decoration: underline; } .ital { font-style: italic; color: #777; }

.canvas { width: 696px; margin-left: 6px; border: 1px solid #b5b5b5; background: #fff; flex: none; margin-top: 1px; height: 540px; overflow: hidden; }
.vgrip { width: 9px; flex: none; display: flex; align-items: center; justify-content: center; }
.vgrip i { width: 3px; height: 17px; background: conic-gradient(from 270deg at 1px 1px, #b4b4b4 90deg, transparent 0) 0 0 / 3px 3px; }

.right { width: 320px; flex: none; position: relative; display: flex; flex-direction: column; }
.rhead { padding: 0 2px 0 1px; }
.c1 { height: 24px; width: 317px; padding-left: 5px; margin-top: 1px; flex: none; }
.c1 span { margin-left: 2px; }
.rbody { display: flex; margin-top: 6px; height: 460px; flex: none; }
.tabs { width: 38px; flex: none; margin-right: 3px; }
.cur { height: 32px; display: flex; align-items: center; justify-content: center; }
.dark { background: #5c5c5c; height: 428px; padding: 5px 0 0 4px; display: flex; flex-direction: column; gap: 10px; }
.pane { width: 276px; display: flex; flex-direction: column; }
.c2 { height: 24px; padding-left: 6px; flex: none; }
.c2 span { margin-left: 1px; }
.symbol { display: flex; margin-top: 6px; height: 142px; flex: none; }
.prev { width: 61px; height: 61px; border: 1px solid #222; margin: 38px 25px 0 20px; flex: none; }
.stree { width: 102px; height: 136px; border: 1px solid #b5b5b5; background: #fff; flex: none; }
.s1, .s2 { height: 18px; display: flex; align-items: center; padding-left: 6px; }
.s1 { background: #efefef; } .s1 .tri { margin-right: 9px; } .s2 { padding-left: 43px; }
.box1 { width: 16px; height: 16px; border: 1px solid #7a8fa5; margin-right: 6px; flex: none; } .box1.g { border-color: #999; background: #fff; }
.sbtns { display: grid; grid-template-columns: 28px 28px; grid-auto-rows: 24px; gap: 5px 6px; margin: 1px 0 0 6px; align-content: start; }
.pb { border: 1px solid #b5b5b5; border-radius: 3px; background: linear-gradient(#fff, #eee); display: flex; align-items: center; justify-content: center; flex: none; }
.dis { border-color: #d0d0d0; } .dis svg { opacity: .55; }
.hr { height: 1px; background: #a6a6a6; flex: none; }
.scroll { display: flex; height: 220px; margin-top: 8px; flex: none; overflow: hidden; }
.inner { width: 253px; flex: none; display: flex; flex-direction: column; }
.frow { display: flex; align-items: center; height: 22px; flex: none; }
.frow label { width: 37px; flex: none; }
.unit { width: 216px; height: 22px; padding-left: 3px; }
.slider { width: 112px; display: flex; align-items: center; flex: none; }
.slider i { flex: 1; height: 5px; background: #1e90ec; border: 1px solid #0b69b6; border-radius: 2px 0 0 2px; }
.slider b { width: 13px; height: 13px; border: 1px solid #999; border-radius: 3px; background: #fff; }
.spin { display: flex; align-items: center; border: 1px solid #ababab; border-radius: 3px; background: #fff; padding-left: 4px; flex: none; }
.op { width: 100px; height: 20px; margin-left: 4px; }
.sp { margin-left: auto; width: 14px; height: 100%; border-left: 1px solid #bbb; background: #f6f6f6; display: flex; flex-direction: column; align-items: center; justify-content: center; gap: 4px; border-radius: 0 3px 3px 0; }
.colr { width: 204px; height: 22px; border: 1px solid #ababab; border-radius: 3px; padding: 2px 4px; background: #fafafa; }
.colr i { height: 16px; border-radius: 3px; background: #c43c39; }
.cdd { width: 12px; height: 22px; border: 1px solid #ababab; border-radius: 3px; display: flex; align-items: center; justify-content: center; background: #fafafa; }
.cdd .tri { border-left-width: 3.500px; border-right-width: 3.500px; }
.h2 { margin-top: 67px; }
.symf { display: flex; align-items: center; height: 22px; margin-top: 6px; flex: none; }
.sf { width: 223px; height: 22px; padding-left: 9px; margin-right: 10px; }
.sf span { margin-left: 5px; }
.clr { margin-left: auto; margin-right: 9px; }
.sdd { width: 20px; height: 100%; border-left: 1px solid #ababab; display: flex; align-items: center; justify-content: center; background: #fafafa; border-radius: 0 3px 3px 0; }
.gal { border: 1px solid #b5b5b5; border-bottom: 0; background: #fff; height: 52px; margin-top: 5px; display: flex; padding-left: 21px; flex: none; }
.g1 { width: 64px; margin-top: 20px; border: 1px solid #111; border-bottom: 0; background: radial-gradient(circle at 0 0, #0d0887 0, #7201a8 22px, #bd3786 40px, #ed7953 56px, #fdb42f 74px); }
.g2 { width: 64px; margin: 20px 0 0 37px; border: 1px solid #7f8035; border-bottom: 0; background: linear-gradient(#4a4a4a, #999); }
.gsb { margin-left: auto; }
.t2 { height: 27px; }
.msb { margin-left: 9px; } .t3 { height: 143px; }
.lr { display: flex; align-items: center; height: 22px; margin-top: 9px; padding-left: 5px; flex: none; }
.big { border-width: 6px; border-left: 7px solid #333; border-right: 0; }
.lr span { margin-left: 9px; }
.act { display: flex; align-items: center; height: 22px; margin-top: 5px; flex: none; }
.un { width: 24px; height: 22px; margin-right: 6px; }
.lv { margin: 0 4px 0 49px; }
.apply { width: 80px; height: 21px; margin-left: auto; border: 1px solid #ababab; border-radius: 3px; background: linear-gradient(#fff, #eee); display: flex; align-items: center; justify-content: center; padding: 1px 2px 0 0; }
.btabs { display: flex; margin: 4px 0 0 -3px; align-items: flex-start; border-top: 1px solid #b5b5b5; }
.btabs div { height: 21px; border: 1px solid #b5b5b5; border-top: 0; background: #dcdcdc; display: flex; align-items: center; justify-content: center; border-radius: 0 0 3px 3px; padding-right: 2px; }
.btabs .ta { width: 87px; height: 23px; background: #f4f4f4; } .btabs .tb2 { width: 115px; } .btabs .tc { width: 83px; }
.mark { position: absolute; left: 28px; top: 489px; color: rgba(125, 125, 125, .6); }
.mark p { margin: 0; font-size: 18px; line-height: 28px; height: 27px; }
.mark .m2 { font-size: 13.500px; line-height: 20px; height: 20px; margin-left: -1px; }

.status { display: flex; align-items: center; height: 26px; margin-top: 1px; padding-left: 4px; flex: none; }
.loc { width: 200px; height: 22px; padding-left: 8px; color: #666; margin-right: 384px; flex: none; }
.loc span { margin-left: 5px; }
.co { width: 76px; height: 22px; margin-left: 3px; padding-left: 5px; flex: none; }
.ext { margin-left: 4px; } .scl { margin-left: 12px; }
.sc { width: 80px; height: 22px; margin-left: 3px; padding-left: 4px; flex: none; } .sc .sdd { margin-left: auto; }
.lk { margin-left: 12px; } .mgl { margin-left: 7px; }
.mg { width: 88px; height: 20px; margin-left: 4px; } .rol { margin-left: 8px; }
.ro { width: 84px; height: 20px; margin-left: 9px; }
.rn { margin: 0 4px 0 6px; }
.cr { margin-left: 19px; } .eps { margin-left: 4px; } .bu { margin-left: 19px; }
</style>
